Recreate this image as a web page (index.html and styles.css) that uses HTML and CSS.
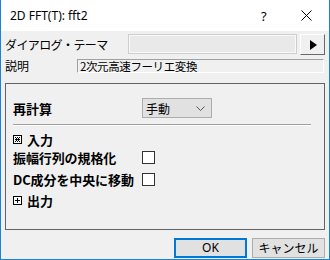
FILE: index.html
```html
<!DOCTYPE html>
<html lang="ja">
<head>
  <meta charset="UTF-8">
  <title>2D FFT(T): fft2</title>
  <link rel="stylesheet" href="styles.css">
</head>
<body>
  <div class="dialog">
    <div class="titlebar">
      <span class="title">2D FFT(T): fft2</span>
      <span class="help">?</span>
      <span class="close">
        <svg width="11" height="11" viewBox="0 0 11 11"><path d="M0.5 0.5 L10.5 10.5 M10.5 0.5 L0.5 10.5" stroke="#000" stroke-width="1"/></svg>
      </span>
    </div>

    <div class="content">
      <div class="row theme-row">
        <span class="label theme-label">ダイアログ・テーマ</span>
        <div class="theme-box"></div>
        <button class="arrow-btn">
          <svg width="8" height="10" viewBox="0 0 8 10"><path d="M1 0 L8 5 L1 10 Z" fill="#000"/></svg>
        </button>
      </div>

      <div class="row desc-row">
        <span class="label desc-label">説明</span>
        <div class="desc-box">2次元高速フーリエ変換</div>
      </div>

      <div class="group">
        <div class="prow recalc-row">
          <span class="plabel">再計算</span>
          <div class="select">
            <span>手動</span>
            <svg width="9" height="5" viewBox="0 0 9 5"><path d="M0.5 0.5 L4.5 4.5 L8.5 0.5" fill="none" stroke="#555" stroke-width="1"/></svg>
          </div>
        </div>
        <div class="sep"></div>

        <div class="prow node-row input-node">
          <svg class="node-icon" width="9" height="9" viewBox="0 0 9 9">
            <rect x="0.5" y="0.5" width="8" height="8" fill="#fff" stroke="#000"/>
            <path d="M2 2h1v1h-1z M4 2h1v1h-1z M6 2h1v1h-1z M3 3h1v1h-1z M5 3h1v1h-1z M2 4h5v1h-5z M3 5h1v1h-1z M5 5h1v1h-1z M2 6h1v1h-1z M4 6h1v1h-1z M6 6h1v1h-1z" fill="#000"/>
          </svg>
          <span class="plabel">入力</span>
        </div>

        <div class="prow check-row norm-row">
          <span class="plabel">振幅行列の規格化</span>
          <span class="checkbox"></span>
        </div>

        <div class="prow check-row dc-row">
          <span class="plabel">DC成分を中央に移動</span>
          <span class="checkbox"></span>
        </div>

        <div class="prow node-row output-node">
          <svg class="node-icon" width="9" height="9" viewBox="0 0 9 9">
            <rect x="0.5" y="0.5" width="8" height="8" fill="#fff" stroke="#000"/>
            <path d="M2 4h5v1h-5z M4 2h1v5h-1z" fill="#000"/>
          </svg>
          <span class="plabel">出力</span>
        </div>
      </div>

      <div class="buttons">
        <button class="btn ok-btn">OK</button>
        <button class="btn">キャンセル</button>
      </div>
    </div>
  </div>
</body>
</html>
```

FILE: styles.css
```css
body {
  margin: 0;
  padding: 0;
  background-color: #fff;
  font-family: "Noto Sans CJK JP", "Noto Sans", sans-serif;
  font-size: 12px;
  color: #000;
}

.dialog {
  width: 330px;
  height: 260px;
  box-sizing: border-box;
  border: 1px solid #1883d7;
  border-top: none;
  background-color: #f0f0f0;
  display: flex;
  flex-direction: column;
}

.titlebar {
  height: 31px;
  background-color: #fff;
  display: flex;
  align-items: center;
  padding-left: 9px;
}

.title {
  font-family: "Noto Sans", sans-serif;
  font-size: 12px;
  flex: 1;
}

.help {
  font-family: "Noto Sans", sans-serif;
  font-size: 13px;
  width: 40px;
}

.close {
  width: 28px;
  display: flex;
  align-items: center;
  height: 11px;
}

.content {
  flex: 1;
  padding: 0 4px;
  display: flex;
  flex-direction: column;
}

.row {
  display: flex;
  align-items: center;
}

.label {
  flex-shrink: 0;
  line-height: 14px;
}

.theme-row {
  margin-top: 3px;
  height: 21px;
}

.theme-label {
  width: 123px;
  letter-spacing: -0.6px;
}

.theme-box {
  width: 169px;
  height: 20px;
  box-sizing: border-box;
  border: 1px solid #cdcdcd;
  background-color: #e9e9e9;
  box-shadow: inset 0 0 0 1px #f9f9f9;
  align-self: flex-start;
}

.arrow-btn {
  margin-left: 3px;
  width: 25px;
  height: 21px;
  padding: 0;
  box-sizing: border-box;
  background-color: #f0f0f0;
  border: 1px solid;
  border-color: #fff #696969 #696969 #fff;
  display: flex;
  align-items: center;
  justify-content: center;
}

.desc-row {
  margin-top: 4px;
  height: 14px;
}

.desc-label {
  width: 72px;
}

.desc-box {
  width: 247px;
  height: 14px;
  box-sizing: border-box;
  border: 1px solid;
  border-color: #a0a0a0 #fff #fff #a0a0a0;
  background-color: #f0f0f0;
  padding-left: 2px;
  font-size: 11.5px;
  line-height: 12px;
  letter-spacing: -0.4px;
  white-space: nowrap;
  overflow: hidden;
}

.group {
  margin-top: 10px;
  width: 320px;
  height: 147px;
  box-sizing: border-box;
  border: 1px solid #646464;
  padding: 14px 0 0 7px;
  display: flex;
  flex-direction: column;
}

.prow {
  display: flex;
  align-items: center;
}

.plabel {
  font-weight: bold;
  font-size: 13px;
  line-height: 15px;
  white-space: nowrap;
}

.recalc-row {
  height: 20px;
}

.recalc-row .plabel,
.check-row .plabel {
  width: 129px;
}

.check-row .plabel {
  letter-spacing: -0.1px;
}

.select {
  width: 70px;
  height: 20px;
  box-sizing: border-box;
  border: 1px solid #adadad;
  background-color: #e1e1e1;
  display: flex;
  align-items: center;
  justify-content: space-between;
  padding: 0 6px 0 3px;
  font-size: 12px;
}

.sep {
  margin-top: 6px;
  width: 298px;
  height: 1px;
  background-color: #a0a0a0;
  border-bottom: 1px solid #fff;
}

.node-row {
  gap: 5px;
}

.input-node {
  margin-top: 4px;
  height: 18px;
}

.norm-row {
  height: 19px;
}

.dc-row {
  margin-top: 3px;
  height: 19px;
}

.output-node {
  margin-top: 2px;
  height: 19px;
}

.checkbox {
  width: 13px;
  height: 13px;
  box-sizing: border-box;
  border: 1px solid #333;
  background-color: #fff;
}

.buttons {
  margin-top: 8px;
  display: flex;
  justify-content: flex-end;
  gap: 5px;
}

.btn {
  width: 73px;
  height: 20px;
  box-sizing: border-box;
  padding: 0;
  border: 1px solid #adadad;
  background-color: #e1e1e1;
  font-family: "Noto Sans CJK JP", "Noto Sans", sans-serif;
  font-size: 12px;
  line-height: 16px;
  color: #000;
}

.ok-btn {
  border: 2px solid #0078d7;
  font-family: "Noto Sans", sans-serif;
}
```
